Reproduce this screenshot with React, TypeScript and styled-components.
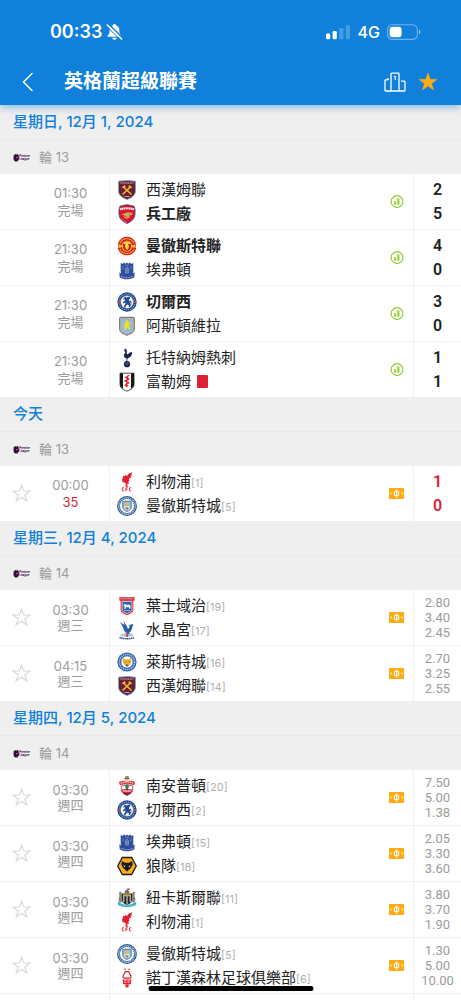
import React, { useState } from 'react';
import styled, { createGlobalStyle } from 'styled-components';

const latin = 'Inter, "Noto Sans CJK TC", sans-serif';
const numeric = 'Roboto, "Noto Sans CJK TC", sans-serif';

const color = {
  blue: '#1080db',
  orange: '#ffab10',
  red: '#df1f35',
  green: '#8fce2a',
  ink: '#222222',
  muted: '#9c9c9c',
  faint: '#b0b0b0',
  line: '#f1f1f1',
  band: '#efefef',
};

const GlobalStyle = createGlobalStyle`
  *, *::before, *::after { box-sizing: border-box; }
  body { margin: 0; background: #fff; font-family: ${latin}; color: ${color.ink}; }
  h1, h2, h3, p, ul { margin: 0; padding: 0; font-weight: inherit; }
  ul { list-style: none; }
  svg { display: block; flex: none; }
`;

/* ---------- layout ---------- */

const Screen = styled.div`
  display: flex;
  flex-direction: column;
  height: 100vh;
  overflow: hidden;
`;

const Header = styled.header`
  position: relative;
  z-index: 1;
  flex: none;
  padding-top: 8px;
  background: ${color.blue};
  color: #fff;
  box-shadow: 0 2px 8px rgba(16, 128, 219, 0.5);
`;

const StatusBar = styled.div`
  display: flex;
  align-items: center;
  justify-content: space-between;
  height: 48px;
  padding: 0 40px 0 50px;
`;

const StatusGroup = styled.div<{ $gap: number }>`
  display: flex;
  align-items: center;
  gap: ${(p) => p.$gap}px;
`;

const Clock = styled.span`
  font-size: 18px;
  font-weight: 600;
  line-height: 24px;
`;

const Network = styled.span`
  font-size: 16px;
  font-weight: 500;
  line-height: 24px;
`;

const NavBar = styled.nav`
  display: flex;
  align-items: center;
  height: 49px;
  padding: 2px 23px 0 20px;
`;

const IconButton = styled.button`
  display: flex;
  align-items: center;
  justify-content: center;
  padding: 0;
  border: 0;
  background: none;
  color: inherit;
  cursor: pointer;
`;

const Title = styled.h1`
  flex: 1;
  margin-left: 28px;
  font-size: 19px;
  font-weight: 700;
  line-height: 28px;
`;

const NavActions = styled.div`
  display: flex;
  align-items: center;
  gap: 12px;
`;

const Feed = styled.main`
  flex: 1;
  min-height: 0;
  overflow-y: auto;
  scrollbar-width: none;
`;

const DateHeading = styled.h2`
  height: 35px;
  padding: 0 13px;
  border-bottom: 1px solid #e9e9e9;
  background: ${color.band};
  color: ${color.blue};
  font-size: 15px;
  font-weight: 500;
  line-height: 34px;
`;

const RoundHeading = styled.h3`
  display: flex;
  align-items: center;
  gap: 8px;
  height: 34px;
  padding: 0 13px;
  background: ${color.band};
  color: ${color.muted};
  font-size: 13px;
  line-height: 30px;
`;

const MatchRow = styled.li`
  display: grid;
  grid-template-columns: 34px 76px 1fr 48px;

  & + & {
    border-top: 1px solid ${color.line};
  }
`;

const FollowCell = styled.div`
  display: flex;
  align-items: center;
  padding-left: 12px;
`;

const WhenCell = styled.div<{ $lineHeight: number }>`
  display: flex;
  flex-direction: column;
  align-items: center;
  justify-content: center;
  min-height: 55px;
  padding-right: 2px;
  border-right: 1px solid ${color.line};
  color: ${color.muted};
  font-size: 13px;
  line-height: ${(p) => p.$lineHeight}px;
`;

const Minute = styled.span`
  color: ${color.red};
`;

const MatchBody = styled.div`
  display: flex;
  align-items: center;
  justify-content: space-between;
  padding: 0 9px 0 7px;
`;

const Team = styled.p<{ $winner?: boolean }>`
  display: flex;
  align-items: center;
  gap: 9px;
  height: 24px;
  font-size: 15px;
  font-weight: ${(p) => (p.$winner ? 700 : 400)};
  line-height: 24px;
  white-space: nowrap;
`;

const Rank = styled.span`
  color: ${color.faint};
  font-size: 11px;
  font-weight: 400;
  line-height: 1;
`;

const RedCard = styled.span`
  display: inline-block;
  width: 11px;
  height: 13px;
  margin-left: 6px;
  border-radius: 1px;
  background: ${color.red};
  vertical-align: -1px;
`;

const ResultCell = styled.div`
  display: flex;
  flex-direction: column;
  align-items: center;
  justify-content: center;
  border-left: 1px solid ${color.line};
  font-family: ${numeric};
`;

const Score = styled.span<{ $live: boolean }>`
  color: ${(p) => (p.$live ? color.red : color.ink)};
  font-size: 16px;
  font-weight: 600;
  line-height: 24px;
`;

const Odd = styled.span`
  color: ${color.muted};
  font-size: 13px;
  line-height: 15px;
`;

const HomeIndicator = styled.div`
  position: fixed;
  bottom: 9px;
  left: 50%;
  width: 165px;
  height: 5px;
  border-radius: 3px;
  background: #000;
  transform: translateX(-50%);
`;

/* ---------- interface icons ---------- */

const BellOff = () => (
  <svg width="17" height="18" viewBox="0 0 17 18" fill="#fff">
    <path d="M8.5 1c.8 0 1.300.5 1.400 1.200 2.200.6 3.400 2.400 3.400 4.700 0 3.400.9 4.600 2 5.700.5.6.2 1.200-.5 1.200H2.200c-.7 0-1-.6-.5-1.200 1.100-1.100 2-2.300 2-5.700 0-2.300 1.200-4.100 3.400-4.700C7.200 1.500 7.700 1 8.500 1zM6.200 14.700h4.600c-.2 1.200-1.100 2-2.300 2s-2.100-.8-2.300-2z" />
    <path d="M2.300.8L16.500 14.600" stroke={color.blue} strokeWidth="1.500" />
    <path d="M1.200 2L15.600 16" stroke="#fff" strokeWidth="1.500" strokeLinecap="round" />
    <path d="M.5 3.300L14 16.600" stroke={color.blue} strokeWidth="1" />
  </svg>
);

const Signal = () => (
  <svg width="25" height="16" viewBox="0 0 25 16" fill="#fff">
    <rect x="0" y="9.500" width="4.200" height="5.700" rx="1.200" />
    <rect x="6.600" y="7" width="4.200" height="8.200" rx="1.200" />
    <rect x="13.200" y="4" width="4.200" height="11.200" rx="1.200" opacity=".22" />
    <rect x="19.800" y="1" width="4.200" height="14.200" rx="1.200" opacity=".22" />
  </svg>
);

const Battery = () => (
  <svg width="34" height="16" viewBox="0 0 34 16">
    <rect x=".6" y=".8" width="29.800" height="14.600" rx="4.800" fill="none" stroke="#fff" strokeOpacity=".4" strokeWidth="1.100" />
    <rect x="2.600" y="2.700" width="12" height="10.600" rx="3" fill="#fff" />
    <path d="M32 5.800c1 .4 1.600 1.200 1.600 2.200S33 9.800 32 10.200z" fill="#fff" opacity=".5" />
  </svg>
);

const Back = () => (
  <svg width="16" height="20" viewBox="0 0 16 20" fill="none" stroke="#fff" strokeWidth="1.500" strokeLinecap="round" strokeLinejoin="round">
    <path d="M12 1.500L3.500 10l8.500 8.500" />
  </svg>
);

const Podium = () => (
  <svg width="22" height="20" viewBox="0 0 22 20" fill="none" stroke="#fff" strokeWidth="1.300" strokeLinejoin="round">
    <path d="M7 19V2c0-.5.300-.8.800-.8h6.400c.5 0 .8.300.8.800v17" />
    <path d="M5 7H3.500v.8H1.800c-.5 0-.8.300-.8.800v9.600c0 .5.300.8.800.8h18.400c.5 0 .8-.3.800-.8V10c0-.5-.3-.8-.8-.8H17" />
    <path d="M9.800 4.400h1.400V8" strokeWidth="1.100" />
  </svg>
);

const starPath = 'M10 1l2.250 6.300 6.650.15-5.300 4.050 1.950 6.400L10 14.100l-5.550 3.800 1.950-6.400-5.300-4.050 6.650-.15z';

const StarIcon = ({ active, size }: { active: boolean; size: number }) => (
  <svg width={size} height={size} viewBox="0 0 20 20">
    <path d={starPath} fill={active ? color.orange : 'none'} stroke={active ? color.orange : '#dcdcdc'} strokeWidth={active ? 0.5 : 1.4} />
  </svg>
);

const StatsIcon = () => (
  <svg width="14" height="14" viewBox="0 0 14 14" role="img" aria-label="統計">
    <circle cx="7" cy="6.500" r="5.900" fill="none" stroke={color.green} strokeWidth="1.200" />
    <path d="M4.100 6.300h2.100v3.500H4.100zM7.300 3.500h2.100v6.300H7.300z" fill={color.green} />
  </svg>
);

const BetIcon = () => (
  <svg width="15" height="11" viewBox="0 0 15 11" role="img" aria-label="投注">
    <rect width="15" height="11" rx=".8" fill={color.orange} />
    <ellipse cx="7.500" cy="5.500" rx="2.300" ry="2.500" fill="none" stroke="#fff" strokeWidth="1.100" />
    <path d="M7.500 1.500v8" stroke="#fff" strokeWidth="1.200" />
    <path d="M2 4.500v2M13 4.500v2" stroke="#fff" strokeWidth="1" />
  </svg>
);

const LeagueLogo = () => (
  <svg width="18" height="9" viewBox="0 0 18 9" fill="#3b0a45">
    <path d="M.8 1.600l1 .5.600-1.300.9 1L4.500.6l.5 1.500 1-.1-.4 1.300.5 1.500-.4 2-1.400 1.600-1.900.1C1 7.900.300 6.500.5 5z" />
    <path d="M3.200 4.200l1.500-.2-.8 1.200z" fill="#efefef" />
    <text x="6.300" y="4.300" fontFamily="Inter, sans-serif" fontWeight="700" fontSize="2.800">Premier</text>
    <text x="6.300" y="7.300" fontFamily="Inter, sans-serif" fontWeight="700" fontSize="2.800">League</text>
  </svg>
);

/* ---------- club crests ---------- */

type Club =
  | 'westham' | 'arsenal' | 'manutd' | 'everton' | 'chelsea' | 'villa' | 'spurs' | 'fulham'
  | 'liverpool' | 'mancity' | 'ipswich' | 'palace' | 'leicester' | 'southampton' | 'wolves'
  | 'newcastle' | 'forest' | 'brentford';

const crests: Record<Club, React.ReactNode> = {
  westham: (
    <>
      <path d="M1.500 1.200Q10-.2 18.500 1.200V11c0 4-3.500 6.500-8.500 8.600C5 17.500 1.500 15 1.500 11z" fill="#6d1f35" stroke="#6aaed0" strokeWidth=".8" />
      <path d="M3.500 3h13" stroke="#d8c5cc" strokeWidth="1.200" strokeDasharray="1.300 .5" />
      <path d="M5.500 14.500L14 6.500M14.500 14.500L6 6.500" stroke="#f2c230" strokeWidth="1.500" />
      <path d="M4.300 7.900l3.500-3 .9 2.400zM15.700 7.900l-3.500-3-.9 2.400z" fill="#f5c92c" />
      <path d="M7.500 16.500h5" stroke="#d8c5cc" strokeWidth=".8" />
    </>
  ),
  arsenal: (
    <>
      <path d="M3 2.200Q10-.8 17 2.200 18.500 5 18 10c-.4 4.500-3 7.500-8 9.500-5-2-7.600-5-8-9.500-.5-5 1-7.800 1-7.800z" fill="#e3122b" stroke="#3c4f86" strokeWidth=".9" />
      <path d="M3 5.300Q10 3.200 17 5.300" stroke="#fbe6e8" strokeWidth="2.200" strokeDasharray="1.500 .3" fill="none" />
      <path d="M3.800 10.500l7-2.200 5 .4-.5 2.300-3.200.6 1 2H9l-.7-2z" fill="#c9a35b" />
      <circle cx="9.500" cy="12.300" r="2.100" fill="none" stroke="#d8b770" strokeWidth="1" />
      <path d="M4.500 14.500c1.200 2 3 3.300 5.500 4.300" stroke="#fff" strokeWidth=".6" fill="none" opacity=".6" />
    </>
  ),
  manutd: (
    <>
      <circle cx="10" cy="10" r="8.600" fill="#f4c32a" stroke="#c9341f" strokeWidth=".6" />
      <path d="M1 8.300C2 3.200 6 .7 10 .7s8 2.500 9 7.600l-3.800 1C14.500 6 12.500 4.800 10 4.800S5.500 6 4.800 9.300z" fill="#d9231f" />
      <path d="M.8 12l4-.8C5.500 14.500 7.500 15.600 10 15.600s4.500-1.100 5.200-4.400l4 .8c-1.200 4.900-5.200 7.300-9.200 7.300S2 16.900.8 12z" fill="#d9231f" />
      <path d="M2.900 7.500C4 4.200 7 2.700 10 2.700s6 1.500 7.100 4.800M2.900 13c1.300 3 4.100 4.400 7.100 4.400s5.800-1.400 7.100-4.400" fill="none" stroke="#f6cd3a" strokeWidth="1.100" strokeDasharray="1.200 .5" />
      <path d="M6 5.800h8v5.700c0 2-2 3-4 3.800-2-.8-4-1.800-4-3.800z" fill="#d9231f" />
      <path d="M6.300 6h7.400v2H6.300z" fill="#f8d64a" />
      <path d="M8.400 8l1.200-.8 1.200.6 1.200 2.400-1.100 3.400H9.300L8 10.300z" fill="#f8d64a" />
    </>
  ),
  everton: (
    <>
      <path d="M3.700 3l1.800 1L7 2.500 8.500 3.700 10 2.500l1.500 1.200L13 2.500 14.500 4l1.800-1v8.500c0 3.500-2.800 5.500-6.300 6.500-3.500-1-6.300-3-6.300-6.500z" fill="#2e4d9b" />
      <path d="M2.300 12.300l2.700 2c3 1.700 7 1.700 10 0l2.700-2-.4 5c-4.500 2.700-10.100 2.700-14.600 0z" fill="#2e4d9b" />
      <path d="M4 16.200c4 2 8 2 12 0" stroke="#9fb0da" strokeWidth="1" fill="none" strokeDasharray="1.200 .5" />
      <path d="M8.500 13V8.200L10 7l1.500 1.200V13zM8 10h4" fill="#5b75b8" stroke="#8fa3d2" strokeWidth=".6" />
      <path d="M6 6v3.500M14 6v3.500M8 5.300h4" stroke="#7f95ca" strokeWidth=".8" fill="none" />
    </>
  ),
  chelsea: (
    <>
      <circle cx="10" cy="10" r="9.700" fill="#1d4a99" />
      <circle cx="10" cy="10" r="7.900" fill="none" stroke="#8ea6d6" strokeWidth="1.200" strokeDasharray="1 1.100" />
      <circle cx="10" cy="10" r="6.300" fill="#fff" stroke="#c7a454" strokeWidth=".5" />
      <circle cx="2.100" cy="10" r="1" fill="#d9333f" />
      <circle cx="17.900" cy="10" r="1" fill="#d9333f" />
      <path d="M7 5.300l1.600-.5.800.9 1.500-1 2 .3.300 1.500-1.300 1.300.6 1.800 1.400-1 .5 1.200-1.400 1.300.9 1.700-.8 2.300h-1.600l.6-1.700-1.600-1-1.700 1.500-.2 1.600H6.900l.5-2.300 1.300-1.900-.6-.9-1.900 1-.5-1L8 8.600l-.1-1.300-1.700.2-.1-.9 1.400-.2z" fill="#1d4a99" />
      <path d="M12.700 13.500c1.200-.7 1.800-2 1.500-3.300" stroke="#1d4a99" strokeWidth=".7" fill="none" />
    </>
  ),
  villa: (
    <>
      <path d="M3.500 1.300h13c.5 0 .8.300.8.800v11.400c0 3-3.300 4-7.300 5.800-4-1.800-7.300-2.800-7.300-5.800V2.100c0-.5.300-.8.800-.8z" fill="#8fb9df" stroke="#87596c" strokeWidth="1" />
      <path d="M4.300 2.800h11.400v10.500c0 2-2.700 2.800-5.700 4.200-3-1.400-5.700-2.200-5.700-4.200z" fill="none" stroke="#dcc05a" strokeWidth=".5" />
      <path d="M8.500 4l2.500.6.8 2 2.300-.7-.6 2-1.700.9.200 1.700 1.700 2-1.500 1.200-2-2-1.800 2.500-2-.6 1.800-2.200L6 10l1.800-.3L7 7.500l1.600-.8z" fill="#f1dd25" />
    </>
  ),
  spurs: (
    <>
      <circle cx="10" cy="16.200" r="3.100" fill="#1b2350" />
      <path d="M8 15.700l2 .8 2-1M10 13.500v2.500" stroke="#8a90ad" strokeWidth=".5" fill="none" />
      <path d="M9.300 13.200l.3-2.700C7 10 6.200 8 7.300 6l1-1.500-.8-1.900-.8-.4.8-.5L8.300.5l1.200 1.100.5 2.300-.3 2.100c1 .6 1.800-.4 3-1.500l1.900-.6.5 1.400-1 2.900-2.900 2.100-.8.5-.2 2.500z" fill="#1b2350" />
    </>
  ),
  fulham: (
    <>
      <path d="M3 1.200h14v11c0 3.500-3 5.500-7 7-4-1.500-7-3.500-7-7z" fill="#fff" stroke="#222" strokeWidth=".8" />
      <path d="M3 1.200h3v15.500C4.200 15.600 3 14.300 3 12.200zM17 1.200h-3v15.500c1.800-1.100 3-2.400 3-4.500z" fill="#181818" />
      <path d="M12.300 3.300L8.600 5.500l3.400 1M12.500 6.800L8 9l3.800 1.200M12.300 10.800l-4 2.200 3 .8M10.700 3.500l-1.500 11.500" stroke="#d92431" strokeWidth="1.200" fill="none" />
    </>
  ),
  liverpool: (
    <>
      <path d="M15.500.3l-1.300 2.100 1 .6-1.700 1.500.7 1-2.300 1.200.6 1.600-1.200 1.600 1.100 1.900-1.900-.4-.1 2 .9 1.300H8.500l.4-3L6.700 9.900l-1 1.400-.1-2.200-.8-1.200 1.300-2.400-.5-1.700 2 .5.600-1.300L10 3.900l1.400-1.800L13.300.9z" fill="#e2202f" />
      <path d="M7 15.800H5.300v3H7M8.900 19.300v-3.500h1.800M8.900 17.400h1.500M14.200 15.800h-1.700v3h1.700" stroke="#e63a48" strokeWidth="1" fill="none" />
    </>
  ),
  mancity: (
    <>
      <circle cx="10" cy="10" r="9.300" fill="#fff" stroke="#2b568f" strokeWidth="1.200" />
      <circle cx="10" cy="10" r="7.700" fill="none" stroke="#4a79b4" strokeWidth="1.600" strokeDasharray="1.800 .3" />
      <circle cx="10" cy="10" r="6.300" fill="#f3f7fb" />
      <path d="M5.800 5.300h8.400V11c0 2.200-2 3.500-4.200 4.400-2.200-.9-4.200-2.200-4.200-4.400z" fill="#8fc2e8" stroke="#2f5c97" strokeWidth=".8" />
      <path d="M7.200 9.600V8l1.600-.8L10 6l1.200 1.200 1.600.8v1.600z" fill="#e9b93f" />
      <path d="M6.700 10.800h6.600M7 12.500l2.500 1.400M13 12.500l-2.500 1.400" stroke="#fff" strokeWidth=".7" />
      <circle cx="10" cy="12.500" r="1" fill="#d5474c" />
    </>
  ),
  ipswich: (
    <>
      <path d="M2.300 1h15.400v3.500l-1.300.5v8.800c0 2.800-3 4-6.400 5.500-3.400-1.500-6.400-2.700-6.400-5.500V5l-1.300-.5z" fill="#d9414c" />
      <path d="M3.500 2.300h13" stroke="#f7b5ba" strokeWidth=".8" strokeDasharray="1.500 1" />
      <path d="M5.200 5.500h9.600v8c0 1.900-2.200 2.900-4.800 4-2.600-1.100-4.800-2.100-4.800-4z" fill="#2c63b0" stroke="#fff" strokeWidth=".6" />
      <path d="M6.500 9l1.300-1.200 1.200 1h3.500l1.200 1.200-.5 2.800h-1l-.3-1.500H9L8.300 13h-1l.2-2.500z" fill="#fff" />
      <path d="M7 14.500h6" stroke="#9fc0e6" strokeWidth=".8" />
    </>
  ),
  palace: (
    <>
      <path d="M10.500 13.500c-3-1.500-4-3.500-4.300-6L3 2l4.500 3L6.500.8l3.500 5.700L11 9l1.500-1.800-.3-2L15 4l1.700 1-1.200.8-.3 2.700-2 3.500z" fill="#2a5ea5" />
      <path d="M11.500 11.500c-1 1.500-2.500 2-4 2l1.800 1.500h4.200z" fill="#2a5ea5" />
      <path d="M3.500 15c1.500-1.300 3-1.500 4.500-.8 1.500-.6 3-.6 4.200 0 1.500-.6 3-.4 4.300.8v1.500h-13z" fill="#b7c4d6" />
      <path d="M2.500 17.500c4.500 1.600 10.500 1.600 15 0" stroke="#31568d" strokeWidth="1.500" fill="none" strokeDasharray="1.500 .4" />
      <circle cx="10" cy="15.500" r="1.300" fill="#cf3440" />
    </>
  ),
  leicester: (
    <>
      <circle cx="10" cy="10" r="9.600" fill="#2c5fae" />
      <circle cx="10" cy="10" r="7.600" fill="none" stroke="#b9cdea" strokeWidth="1.500" strokeDasharray="1.300 .8" />
      <circle cx="10" cy="10" r="6" fill="#fff" stroke="#3a69b3" strokeWidth=".5" />
      <path d="M6 6l2 1.300h4L14 6l.4 3.500-1.600 3.200L10 15l-2.800-2.300-1.600-3.200z" fill="#e4b22c" />
      <path d="M8.800 13l1.200 1.800 1.200-1.800-1.200-.8z" fill="#35507f" />
      <path d="M7.800 9.500l1 .6M12.200 9.500l-1 .6" stroke="#8a6a1c" strokeWidth=".7" />
    </>
  ),
  southampton: (
    <>
      <circle cx="10" cy="2.700" r="2.400" fill="#eac978" />
      <path d="M7.600 2.600h4.800M8.300.9h3.400" stroke="#5c3a2a" strokeWidth=".9" />
      <path d="M1.800 6.300Q6 3.600 10 6q4-2.400 8.200.3L17 9.200q-7-2-14 0z" fill="#d94350" />
      <path d="M3.800 7.100Q10 5 16.200 7.100" stroke="#fff" strokeWidth="1.200" strokeDasharray=".9 1" fill="none" />
      <path d="M4.300 10q5.700-2.200 11.400 0v4.500c0 2.300-2.700 3.500-5.700 5-3-1.500-5.700-2.700-5.700-5z" fill="#fff" stroke="#8a1e2c" strokeWidth=".7" />
      <path d="M4.700 13.500L10 13l5.300.5v1c0 2-2.700 3.100-5.300 4.400-2.600-1.300-5.300-2.400-5.300-4.400z" fill="#d81c33" />
      <circle cx="10" cy="10.500" r="2" fill="#2e8b4c" />
      <path d="M9.300 12h1.400v2.500H9.300z" fill="#3d2a1d" />
      <path d="M5.800 15h8.400" stroke="#fff" strokeWidth="1" />
      <path d="M6.500 17.200l3.500 1.700 3.500-1.700" stroke="#222" strokeWidth=".9" fill="none" />
    </>
  ),
  wolves: (
    <>
      <path d="M5.300 1.500h9.400L19.300 10l-4.600 8.500H5.300L.7 10z" fill="#fbad18" stroke="#1c1a19" strokeWidth="1.300" />
      <path d="M4.800 5l3.200 1.800h4L15.200 5l.5 3.800-1.900 3.200-3.800 3.500L6.200 12 4.300 8.800z" fill="#1c1a19" />
      <path d="M6.500 9.300l2.200 1.200-1.500.4zM13.500 9.300l-2.200 1.200 1.500.4z" fill="#fff" />
    </>
  ),
  newcastle: (
    <>
      <path d="M7.800 5.200V2.800h1v-.7h2.400v.7h1v2.400zM9.800.5h.6v2h-.6z" fill="#706a60" />
      <path d="M10.400.5h2.500l-.6 1.600h-1.900z" fill="#e6313c" />
      <path d="M5 5.500h10V12c0 2.500-2.500 4-5 5-2.500-1-5-2.500-5-5z" fill="#252525" />
      <path d="M6.800 8v6M10 8v8.500M13.200 8v6" stroke="#e9e9e9" strokeWidth="1" />
      <path d="M2 4.500l1.500-1L5 5.500v8.500l-2.500 1L1.500 11l1-3zM18 4.500l-1.500-1L15 5.500v8.500l2.500 1 1-4-1-3z" fill="#8b8577" />
      <path d="M6 6.300h8v2H6z" fill="#c9a951" />
      <path d="M.5 13.500l3.500 2q6 2.500 12 0l3.500-2-.8 3.700q-8.700 4.300-17.400 0z" fill="#35aad0" />
      <path d="M3.500 16.700q6.500 2.500 13 0" stroke="#a5dbea" strokeWidth=".7" fill="none" strokeDasharray="1.100 .5" />
    </>
  ),
  forest: (
    <>
      <circle cx="8" cy="1.200" r=".8" fill="#e3222f" />
      <circle cx="12" cy="1.200" r=".8" fill="#e3222f" />
      <path d="M8.300 3.700h3.400c.3 1.400.9 2.300 1.600 3.200.9 1.200.9 2.400-.2 3.200H6.900c-1.100-.8-1.100-2-.2-3.200.7-.9 1.300-1.800 1.600-3.200z" fill="none" stroke="#e3222f" strokeWidth="1.200" />
      <path d="M5.500 12h9M6 13.800h8M6 15.600h8M8 17.300h4M8.500 18.800h3" stroke="#e3222f" strokeWidth="1.200" />
      <path d="M10 12v7M6.500 12v3.500M13.500 12v3.500" stroke="#e3222f" strokeWidth="1" />
    </>
  ),
  brentford: (
    <>
      <circle cx="10" cy="10" r="9.900" fill="#8d8687" />
      <circle cx="10" cy="10" r="7.500" fill="#fff" />
      <circle cx="10" cy="10" r="5.500" fill="#d62a33" />
    </>
  ),
};

const Crest = ({ club }: { club: Club }) => (
  <svg width="20" height="20" viewBox="0 0 20 20" aria-hidden="true">
    {crests[club]}
  </svg>
);

/* ---------- data ---------- */

interface Side {
  club: Club;
  name?: string;
  rank?: number;
  winner?: boolean;
  redCard?: boolean;
}

interface Match {
  time?: string;
  note?: string;
  state: 'finished' | 'live' | 'upcoming';
  sides: Side[];
  result: string[];
}

interface Day {
  date: string;
  round: string;
  matches: Match[];
}

const days: Day[] = [
  {
    date: '星期日, 12月 1, 2024',
    round: '輪 13',
    matches: [
      { time: '01:30', note: '完場', state: 'finished', sides: [{ club: 'westham', name: '西漢姆聯' }, { club: 'arsenal', name: '兵工廠', winner: true }], result: ['2', '5'] },
      { time: '21:30', note: '完場', state: 'finished', sides: [{ club: 'manutd', name: '曼徹斯特聯', winner: true }, { club: 'everton', name: '埃弗頓' }], result: ['4', '0'] },
      { time: '21:30', note: '完場', state: 'finished', sides: [{ club: 'chelsea', name: '切爾西', winner: true }, { club: 'villa', name: '阿斯頓維拉' }], result: ['3', '0'] },
      { time: '21:30', note: '完場', state: 'finished', sides: [{ club: 'spurs', name: '托特納姆熱刺' }, { club: 'fulham', name: '富勒姆', redCard: true }], result: ['1', '1'] },
    ],
  },
  {
    date: '今天',
    round: '輪 13',
    matches: [
      { time: '00:00', note: '35', state: 'live', sides: [{ club: 'liverpool', name: '利物浦', rank: 1 }, { club: 'mancity', name: '曼徹斯特城', rank: 5 }], result: ['1', '0'] },
    ],
  },
  {
    date: '星期三, 12月 4, 2024',
    round: '輪 14',
    matches: [
      { time: '03:30', note: '週三', state: 'upcoming', sides: [{ club: 'ipswich', name: '葉士域治', rank: 19 }, { club: 'palace', name: '水晶宮', rank: 17 }], result: ['2.80', '3.40', '2.45'] },
      { time: '04:15', note: '週三', state: 'upcoming', sides: [{ club: 'leicester', name: '萊斯特城', rank: 16 }, { club: 'westham', name: '西漢姆聯', rank: 14 }], result: ['2.70', '3.25', '2.55'] },
    ],
  },
  {
    date: '星期四, 12月 5, 2024',
    round: '輪 14',
    matches: [
      { time: '03:30', note: '週四', state: 'upcoming', sides: [{ club: 'southampton', name: '南安普頓', rank: 20 }, { club: 'chelsea', name: '切爾西', rank: 2 }], result: ['7.50', '5.00', '1.38'] },
      { time: '03:30', note: '週四', state: 'upcoming', sides: [{ club: 'everton', name: '埃弗頓', rank: 15 }, { club: 'wolves', name: '狼隊', rank: 18 }], result: ['2.05', '3.30', '3.60'] },
      { time: '03:30', note: '週四', state: 'upcoming', sides: [{ club: 'newcastle', name: '紐卡斯爾聯', rank: 11 }, { club: 'liverpool', name: '利物浦', rank: 1 }], result: ['3.80', '3.70', '1.90'] },
      { time: '03:30', note: '週四', state: 'upcoming', sides: [{ club: 'mancity', name: '曼徹斯特城', rank: 5 }, { club: 'forest', name: '諾丁漢森林足球俱樂部', rank: 6 }], result: ['1.30', '5.00', '10.00'] },
      { state: 'upcoming', sides: [{ club: 'brentford' }, { club: 'villa' }], result: [] },
    ],
  },
];

/* ---------- components ---------- */

const FollowButton = ({ size, initial = false }: { size: number; initial?: boolean }) => {
  const [active, setActive] = useState(initial);
  return (
    <IconButton type="button" aria-label="收藏" aria-pressed={active} onClick={() => setActive(!active)}>
      <StarIcon active={active} size={size} />
    </IconButton>
  );
};

const MatchItem = ({ match }: { match: Match }) => {
  const { state } = match;
  return (
    <MatchRow>
      <FollowCell>{state !== 'finished' && <FollowButton size={19} />}</FollowCell>
      <WhenCell $lineHeight={state === 'upcoming' ? 15 : 17}>
        <time>{match.time}</time>
        {state === 'live' ? <Minute>{match.note}</Minute> : <span>{match.note}</span>}
      </WhenCell>
      <MatchBody>
        <div>
          {match.sides.map((side) => (
            <Team key={side.club} $winner={side.winner}>
              <Crest club={side.club} />
              <span>
                {side.name}
                {side.rank && <Rank>[{side.rank}]</Rank>}
                {side.redCard && <RedCard role="img" aria-label="紅牌" />}
              </span>
            </Team>
          ))}
        </div>
        {state === 'finished' ? <StatsIcon /> : <BetIcon />}
      </MatchBody>
      <ResultCell>
        {match.result.map((value, i) =>
          state === 'upcoming' ? <Odd key={i}>{value}</Odd> : <Score key={i} $live={state === 'live'}>{value}</Score>,
        )}
      </ResultCell>
    </MatchRow>
  );
};

export default function App() {
  return (
    <Screen>
      <GlobalStyle />
      <Header>
        <StatusBar>
          <StatusGroup $gap={4}>
            <Clock>00:33</Clock>
            <BellOff />
          </StatusGroup>
          <StatusGroup $gap={7}>
            <Signal />
            <Network>4G</Network>
            <Battery />
          </StatusGroup>
        </StatusBar>
        <NavBar>
          <IconButton type="button" aria-label="返回">
            <Back />
          </IconButton>
          <Title>英格蘭超級聯賽</Title>
          <NavActions>
            <IconButton type="button" aria-label="積分榜">
              <Podium />
            </IconButton>
            <FollowButton size={20} initial />
          </NavActions>
        </NavBar>
      </Header>
      <Feed>
        {days.map((day) => (
          <section key={day.date}>
            <DateHeading>{day.date}</DateHeading>
            <RoundHeading>
              <LeagueLogo />
              {day.round}
            </RoundHeading>
            <ul>
              {day.matches.map((match, i) => (
                <MatchItem key={i} match={match} />
              ))}
            </ul>
          </section>
        ))}
      </Feed>
      <HomeIndicator />
    </Screen>
  );
}
